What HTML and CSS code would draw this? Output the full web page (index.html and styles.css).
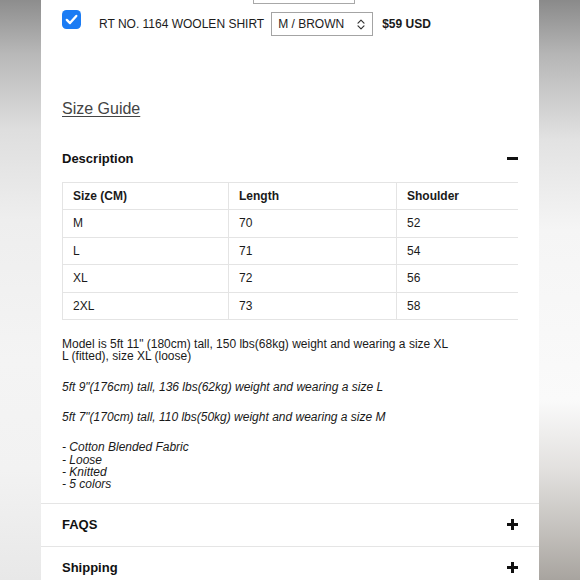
FILE: index.html
```html
<!DOCTYPE html>
<html lang="en">
<head>
<meta charset="utf-8">
<title>Woolen Shirt</title>
<link rel="stylesheet" href="styles.css">
</head>
<body>
<div class="page">
  <div class="gutter gutter-left"></div>
  <main class="panel">
    <div class="prev-select"></div>
    <div class="product-row">
      <span class="check">
        <svg width="19" height="19" viewBox="0 0 19 19"><rect x="0" y="0" width="19" height="19" rx="4.5" fill="#1b7cf4"/><path d="M4.8 9.9 L8 13.1 L14.3 5.9" fill="none" stroke="#fff" stroke-width="2.3" stroke-linecap="round" stroke-linejoin="round"/></svg>
      </span>
      <span class="product-name">RT NO. 1164 WOOLEN SHIRT</span>
      <div class="select">
        <span>M / BROWN</span>
        <svg width="8" height="11" viewBox="0 0 8 11"><path d="M1 4.2 L4 1.2 L7 4.2 M1 6.8 L4 9.8 L7 6.8" fill="none" stroke="#333" stroke-width="1.2" stroke-linecap="round" stroke-linejoin="round"/></svg>
      </div>
      <span class="price">$59 USD</span>
    </div>

    <a class="size-guide" href="#">Size Guide</a>

    <section class="acc acc-open">
      <div class="acc-head">
        <span>Description</span>
        <svg class="acc-icon" width="11" height="11" viewBox="0 0 11 11"><rect x="0" y="4" width="11" height="3" fill="#111"/></svg>
      </div>
      <div class="acc-body">
        <div class="table-wrap">
          <table class="size-table">
            <thead>
              <tr><th>Size (CM)</th><th>Length</th><th>Shoulder</th></tr>
            </thead>
            <tbody>
              <tr><td>M</td><td>70</td><td>52</td></tr>
              <tr><td>L</td><td>71</td><td>54</td></tr>
              <tr><td>XL</td><td>72</td><td>56</td></tr>
              <tr><td>2XL</td><td>73</td><td>58</td></tr>
            </tbody>
          </table>
        </div>
        <p>Model is 5ft 11" (180cm) tall, 150 lbs(68kg) weight and wearing a size XL<br>L (fitted), size XL (loose)</p>
        <p class="it">5ft 9"(176cm) tall, 136 lbs(62kg) weight and wearing a size L</p>
        <p class="it">5ft 7"(170cm) tall, 110 lbs(50kg) weight and wearing a size M</p>
        <p class="it">- Cotton Blended Fabric<br>- Loose<br>- Knitted<br>- 5 colors</p>
      </div>
    </section>

    <section class="acc">
      <div class="acc-head">
        <span>FAQS</span>
        <svg class="acc-icon" width="11" height="11" viewBox="0 0 11 11"><rect x="0" y="4" width="11" height="3" fill="#111"/><rect x="4" y="0" width="3" height="11" fill="#111"/></svg>
      </div>
    </section>

    <section class="acc">
      <div class="acc-head">
        <span>Shipping</span>
        <svg class="acc-icon" width="11" height="11" viewBox="0 0 11 11"><rect x="0" y="4" width="11" height="3" fill="#111"/><rect x="4" y="0" width="3" height="11" fill="#111"/></svg>
      </div>
    </section>
  </main>
  <div class="gutter gutter-right"></div>
</div>
</body>
</html>
```

FILE: styles.css
```css
* { box-sizing: border-box; }

html, body {
  margin: 0;
  padding: 0;
}

body {
  font-family: "Liberation Sans", Arial, Helvetica, sans-serif;
  color: #1a1a1a;
  background: #f2f2f2;
}

.page {
  display: flex;
  width: 580px;
  height: 580px;
  overflow: hidden;
}

.gutter {
  flex: 0 0 41px;
  height: 580px;
}

.gutter-left {
  background: linear-gradient(to bottom, #8d8d8d 0px, #b9b9b9 55px, #dedede 130px, #eeeeee 220px, #f4f4f4 360px, #f2f2f2 470px, #e8e8e8 580px);
}

.gutter-right {
  background: linear-gradient(to bottom, #8a8a8a 0px, #b6b6b6 55px, #e2e2e2 140px, #f5f5f5 230px, #fafafa 400px, #e2e0de 470px, #c4c1bd 530px, #a8a49f 580px);
}

.panel {
  flex: 0 0 498px;
  background: #fff;
  height: 580px;
}

.prev-select {
  margin-left: 212px;
  width: 102px;
  height: 4px;
  border: 1px solid #a8a8a8;
  border-top: none;
}

.product-row {
  display: flex;
  align-items: center;
  height: 24px;
  margin-top: 8px;
  padding-left: 21px;
  font-size: 12px;
}

.check {
  align-self: flex-start;
  margin-top: -2px;
  width: 19px;
  height: 19px;
  display: block;
}

.check svg { display: block; }

.product-name {
  margin-left: 18px;
  color: #1c1c1c;
  white-space: nowrap;
}

.select {
  margin-left: 7px;
  width: 102px;
  height: 24px;
  border: 1px solid #a4a4a4;
  display: flex;
  align-items: center;
  justify-content: space-between;
  padding: 0 7px 0 6px;
  color: #1c1c1c;
}

.select svg { display: block; }

.price {
  margin-left: 9px;
  font-weight: bold;
  color: #1a1a1a;
}

.size-guide {
  display: block;
  width: max-content;
  margin: 64px 0 0 21px;
  font-size: 16px;
  line-height: 18px;
  color: #444;
  text-decoration: underline;
  text-underline-offset: 2px;
}

.acc-head {
  display: flex;
  align-items: center;
  justify-content: space-between;
  padding: 0 21px;
  font-size: 13px;
  font-weight: bold;
  line-height: 15px;
  color: #111;
}

.acc-icon { display: block; }

.acc-open .acc-head {
  margin-top: 33px;
  margin-bottom: 16px;
}

.acc-body {
  padding: 0 21px 13px;
}

.table-wrap {
  width: 456px;
  overflow: hidden;
}

.size-table {
  border-collapse: collapse;
  width: 510px;
  table-layout: fixed;
  font-size: 12px;
  line-height: 14.4px;
}

.size-table th:nth-child(1) { width: 166px; }
.size-table th:nth-child(2) { width: 168px; }
.size-table th:nth-child(3) { width: 176px; }

.size-table th,
.size-table td {
  border: 1px solid #e4e4e4;
  padding: 6px 10px;
  text-align: left;
  color: #1a1a1a;
}

.size-table th { font-weight: bold; }

.acc-body p {
  margin: 18px 0 0;
  font-size: 12px;
  line-height: 12.3px;
  color: #1a1a1a;
}

.acc-body p.it { font-style: italic; }

.acc + .acc {
  border-top: 1px solid #e5e5e5;
}

.acc + .acc .acc-head {
  padding-top: 13px;
  padding-bottom: 14px;
}
```
